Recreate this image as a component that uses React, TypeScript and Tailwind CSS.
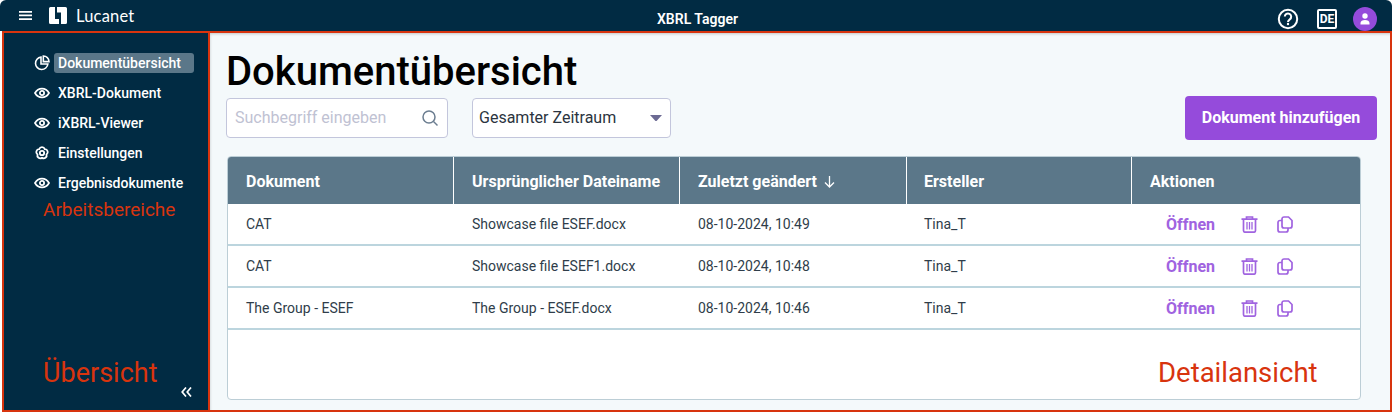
import React from "react";

const Eye = () => (
  <svg width="16" height="16" viewBox="0 0 24 24" fill="none" stroke="#fff" strokeWidth="2.600">
    <path d="M1.500 12C4 7.500 7.800 5.500 12 5.500s8 2 10.500 6.500c-2.500 4.500-6.300 6.500-10.500 6.500S4 16.500 1.500 12z" />
    <circle cx="12" cy="12" r="3.200" />
  </svg>
);

const Pie = () => (
  <svg width="16" height="16" viewBox="0 0 24 24" fill="none" stroke="#fff" strokeWidth="2.400">
    <path d="M10.500 3.200A9.300 9.300 0 1 0 20.800 13.500H10.500z" />
    <path d="M14 1.500a8.500 8.500 0 0 1 8.500 8.500H14z" />
  </svg>
);

const Flower = () => (
  <svg width="16" height="16" viewBox="1 1.500 22 22" fill="none" stroke="#fff" strokeWidth="2.500" strokeLinejoin="round">
    <path d="M8.180 7.240A4 4 0 0 1 15.820 7.240A4 4 0 0 1 18.180 14.510A4 4 0 0 1 12 19A4 4 0 0 1 5.820 14.510A4 4 0 0 1 8.180 7.240Z" />
    <circle cx="12" cy="12.500" r="3" />
  </svg>
);

const Trash = () => (
  <svg width="17" height="17" viewBox="0 0 17 17" fill="none" stroke="#a063e0" strokeWidth="1.700">
    <path d="M.5 3.200h16M5.500 3V1h6v2M2.500 3.200v11.300a1.700 1.700 0 0 0 1.700 1.700h8.600a1.700 1.700 0 0 0 1.700-1.700V3.200" />
    <path d="M6 6v7.500M8.500 6v7.500M11 6v7.500" strokeWidth="1.300" />
  </svg>
);

const Copy = () => (
  <svg width="16" height="17" viewBox="0 0 16 17" fill="none" stroke="#a063e0" strokeWidth="1.700">
    <path d="M5 3a2 2 0 0 1 2-2h4.500L15 4.500V10a2 2 0 0 1-2 2H7a2 2 0 0 1-2-2z" />
    <path d="M5 4.500H3a2 2 0 0 0-2 2V14a2 2 0 0 0 2 2h6a2 2 0 0 0 2-2v-2" />
  </svg>
);

const nav: [string, React.ReactNode, boolean][] = [
  ["Dokumentübersicht", <Pie />, true],
  ["XBRL-Dokument", <Eye />, false],
  ["iXBRL-Viewer", <Eye />, false],
  ["Einstellungen", <Flower />, false],
  ["Ergebnisdokumente", <Eye />, false],
];

const rows = [
  ["CAT", "Showcase file ESEF.docx", "08-10-2024, 10:49", "Tina_T"],
  ["CAT", "Showcase file ESEF1.docx", "08-10-2024, 10:48", "Tina_T"],
  ["The Group - ESEF", "The Group - ESEF.docx", "08-10-2024, 10:46", "Tina_T"],
];

export default function App() {
  return (
    <div className="relative w-[1392px] h-[412px] overflow-hidden bg-white flex flex-col font-['Roboto',sans-serif]">
      <header className="h-[31px] shrink-0 bg-[#012b43] rounded-t-[6px] flex items-center relative">
        <svg className="ml-[19px]" width="13" height="9" viewBox="0 0 13 9" fill="#fff">
          <path d="M0 0h13v1.700H0zM0 3.600h13v1.700H0zM0 7.200h13v1.700H0z" />
        </svg>
        <svg className="ml-[17px]" width="18" height="17" viewBox="0 0 18 17" fill="#fff">
          <path d="M0 1.500A1.500 1.500 0 0 1 1.500 0H6v12h4v5H1.500A1.500 1.500 0 0 1 0 15.500z" />
          <path d="M8 0h8.500A1.500 1.500 0 0 1 18 1.500V15.500A1.500 1.500 0 0 1 16.500 17H12V5.500H8z" />
        </svg>
        <span className="ml-[9px] mt-[1px] text-[16.500px] font-normal tracking-[0.2px] text-white font-['Lato',sans-serif]">Lucanet</span>
        <span className="absolute left-[657px] top-[11px] text-[14px] leading-[16px] font-semibold text-white">XBRL Tagger</span>
        <div className="ml-auto mr-[15px] h-full pt-[7px] flex items-center">
          <svg width="22" height="22" viewBox="0 0 22 22" fill="none">
            <circle cx="11" cy="11" r="9.200" stroke="#fff" strokeWidth="2" />
            <path d="M7.800 8.600a3.200 3.200 0 1 1 5 2.700c-1.200.8-1.800 1.300-1.800 2.700" stroke="#fff" strokeWidth="2" />
            <circle cx="11" cy="16" r="1.200" fill="#fff" />
          </svg>
          <span className="ml-[18px] w-[20px] h-[20px] border-2 border-white rounded-[2px] text-white text-[12px] font-bold leading-[16px] text-center">DE</span>
          <span className="ml-[16px] w-[24px] h-[24px] rounded-full bg-[#954bdb] flex items-center justify-center">
            <svg width="12" height="12" viewBox="0 0 12 12" fill="#fff">
              <circle cx="6" cy="3" r="2.700" />
              <path d="M1.500 11.500V10c0-1.800 2-3 4.500-3s4.500 1.200 4.500 3v1.500z" />
            </svg>
          </span>
        </div>
      </header>

      <div className="flex-1 min-h-0 flex">
        <aside className="w-[208px] shrink-0 ml-[2px] bg-[#012b43] border-2 border-[#d8340e] flex flex-col pt-[15px] pl-[30px]">
          {nav.map(([label, icon, active]) => (
            <div key={label} className="h-[30px] flex items-center shrink-0">
              <span className="w-[16px] flex justify-center">{icon}</span>
              <span className={`ml-[4px] h-[20px] px-[4px] text-[14px] leading-[20px] font-medium text-white rounded-[3px] ${active ? "w-[140px] bg-[#5b7789]" : ""}`}>
                {label}
              </span>
            </div>
          ))}
        </aside>

        <main className="flex-1 min-w-0 bg-[#f4f9fb] border-y-2 border-r-2 border-[#d8340e] pl-[17px] pr-[14px] flex flex-col shadow-[inset_2px_3px_3px_-2px_rgba(0,0,0,0.2)]">
          <h1 className="mt-[14px] -ml-[1px] text-[40px] leading-[50px] font-medium text-black h-[50px]">Dokumentübersicht</h1>
          <div className="mt-[1px] -ml-[1px] flex items-start">
            <div className="w-[222px] h-[40px] bg-white border border-[#c3c6dc] rounded-[4px] flex items-center pl-[8px] pr-[8px]">
              <span className="text-[16px] text-[#bfc2d3]">Suchbegriff eingeben</span>
              <svg className="ml-auto" width="18" height="18" viewBox="0 0 18 18" fill="none" stroke="#6b7d90" strokeWidth="1.500">
                <circle cx="8" cy="8" r="6" />
                <path d="M12.500 12.500L16.500 16.500" />
              </svg>
            </div>
            <div className="ml-[24px] w-[199px] h-[40px] bg-white border border-[#c3c6dc] rounded-[4px] flex items-center pl-[6px] pr-[8px]">
              <span className="text-[16px] text-[#2b3440] -mt-[1px]">Gesamter Zeitraum</span>
              <svg className="ml-auto" width="12" height="6" viewBox="0 0 12 6" fill="#6c6a93"><path d="M0 0h12L7 5.600a1.300 1.300 0 0 1-2 0z" /></svg>
            </div>
            <button className="ml-auto -mr-[1px] w-[192px] h-[44px] -mt-[2px] bg-[#954bdb] rounded-[4px] text-white text-[16px] font-bold">Dokument hinzufügen</button>
          </div>

          <div className="mt-[16px] w-[1134px] h-[244px] bg-white border border-[#bcced6] rounded-[4px] overflow-hidden">
            <div className="grid grid-cols-[226px_226px_227px_225px_1fr] h-[47px] bg-[#5b7789] text-white text-[16px] font-bold">
              {["Dokument", "Ursprünglicher Dateiname", "Zuletzt geändert", "Ersteller", "Aktionen"].map((h, i) => (
                <div key={h} className={`flex items-center pt-[2px] ${i === 3 ? "pl-[17px]" : "pl-[18px]"} ${i < 4 ? "border-r border-white" : ""}`}>
                  {h}
                  {i === 2 && (
                    <svg className="ml-[6px]" width="13" height="13" viewBox="0 0 13 13" fill="none" stroke="#fff" strokeWidth="1.300">
                      <path d="M6.500 1v11M2 7.500l4.500 4.500 4.500-4.500" />
                    </svg>
                  )}
                </div>
              ))}
            </div>
            {rows.map((r) => (
              <div key={r[1]} className="grid grid-cols-[226px_226px_227px_225px_1fr] h-[42px] border-b-2 border-[#bcd5de] text-[14px] text-[#2f3d4a]">
                {r.map((c, i) => (
                  <div key={c} className={`flex items-center pt-[1px] ${i === 3 ? "pl-[17px]" : "pl-[18px]"}`}>{c}</div>
                ))}
                <div className="flex items-center pt-[1px]">
                  <span className="ml-[34px] w-[50px] text-[16px] font-bold text-[#a063e0]">Öffnen</span>
                  <span className="ml-[25px] flex"><Trash /></span>
                  <span className="ml-[19px] flex"><Copy /></span>
                </div>
              </div>
            ))}
          </div>
        </main>
      </div>

      <span className="absolute left-[43px] top-[199px] text-[19px] leading-[22px] text-[#d8340e]">Arbeitsbereiche</span>
      <span className="absolute left-[43px] top-[358px] text-[27px] leading-[30px] text-[#d8340e]">Übersicht</span>
      <span className="absolute left-[1158px] top-[358px] text-[27.500px] leading-[30px] text-[#d8340e]">Detailansicht</span>
      <svg className="absolute left-[181px] top-[387px]" width="11" height="10" viewBox="0 0 11 10" fill="none" stroke="#fff" strokeWidth="1.700">
        <path d="M5 .5L1.200 5 5 9.500M10 .5L6.200 5 10 9.500" />
      </svg>
    </div>
  );
}
